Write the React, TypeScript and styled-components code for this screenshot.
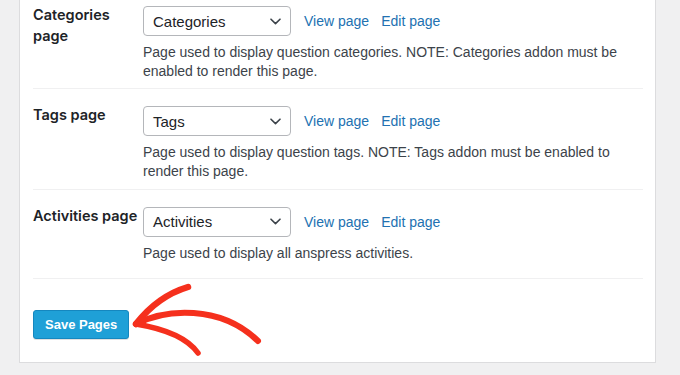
import React from "react";
import styled, { createGlobalStyle } from "styled-components";

const GlobalStyle = createGlobalStyle`
  html, body {
    margin: 0;
    padding: 0;
    background: #f0f0f1;
  }
  body {
    font-family: "Liberation Sans", Arial, sans-serif;
    color: #1d2327;
  }
`;

const pages = [
  {
    label: "Categories page",
    value: "Categories",
    note: "Page used to display question categories. NOTE: Categories addon must be enabled to render this page.",
  },
  {
    label: "Tags page",
    value: "Tags",
    note: "Page used to display question tags. NOTE: Tags addon must be enabled to render this page.",
  },
  {
    label: "Activities page",
    value: "Activities",
    note: "Page used to display all anspress activities.",
  },
];

const Chevron = () => (
  <svg width="11" height="7" viewBox="0 0 11 7">
    <path
      d="M1 1.2 L5.5 5.6 L10 1.2"
      fill="none"
      stroke="#3c434a"
      strokeWidth="1.6"
      strokeLinecap="round"
      strokeLinejoin="round"
    />
  </svg>
);

const Arrow = () => (
  <ArrowLayer width="680" height="375" viewBox="0 0 680 375">
    <g
      fill="none"
      stroke="#f5301d"
      strokeLinecap="round"
      strokeLinejoin="round"
    >
      <path d="M136 324 C 165 309, 220 304, 258 341" strokeWidth="6" />
      <path d="M136 324 C 150 306, 168 293, 188 287" strokeWidth="6.5" />
      <path d="M136 324 C 160 328, 186 336, 198 353" strokeWidth="5.5" />
    </g>
  </ArrowLayer>
);

const App = () => {
  return (
    <Page>
      <GlobalStyle />
      <Panel>
        {pages.map((p) => (
          <Row key={p.label}>
            <Label>{p.label}</Label>
            <Field>
              <Controls>
                <SelectBox>
                  <span>{p.value}</span>
                  <Chevron />
                </SelectBox>
                <Links>
                  <Link href="#">View page</Link>
                  <Link href="#">Edit page</Link>
                </Links>
              </Controls>
              <Description>{p.note}</Description>
            </Field>
          </Row>
        ))}
        <Submit>
          <PrimaryButton type="button">Save Pages</PrimaryButton>
        </Submit>
      </Panel>
      <Arrow />
    </Page>
  );
};

const Page = styled.div`
  position: relative;
  height: 375px;
  overflow: hidden;
  padding: 0 24px 0 19px;
  box-sizing: border-box;
`;

const Panel = styled.div`
  margin-top: -11px;
  background: #fff;
  border: 1px solid #dcdcde;
  border-top: none;
  padding: 0 12px 23px 13px;
`;

const Row = styled.div`
  display: grid;
  grid-template-columns: 110px 1fr;
  padding: 17px 0 8px;
  box-sizing: border-box;
  border-bottom: 1px solid #f0f0f1;
  min-height: 89px;
`;

const Label = styled.div`
  font-family: Inter, "Liberation Sans", sans-serif;
  font-size: 14.5px;
  font-weight: 600;
  line-height: 21px;
  margin-top: -2px;
  color: #1d2327;
`;

const Field = styled.div`
  display: flex;
  flex-direction: column;
`;

const Controls = styled.div`
  display: flex;
  align-items: center;
  gap: 13px;
`;

const SelectBox = styled.div`
  width: 148px;
  height: 30px;
  box-sizing: border-box;
  border: 1px solid #b4b6ba;
  border-radius: 4px;
  background: #fff;
  display: flex;
  align-items: center;
  justify-content: space-between;
  padding: 0 9px 0 9px;
  font-size: 15px;
  color: #1d2327;
`;

const Links = styled.div`
  display: flex;
  gap: 12px;
`;

const Link = styled.a`
  font-size: 14px;
  color: #2271b1;
  text-decoration: none;
`;

const Description = styled.p`
  margin: 7px 0 0;
  font-size: 14px;
  line-height: 18.7px;
  color: #3c434a;
`;

const Submit = styled.div`
  padding-top: 31px;
`;

const PrimaryButton = styled.button`
  height: 29px;
  padding: 0 11px;
  border: 1px solid #1587bf;
  border-radius: 3px;
  background: #1fa0d7;
  color: #fff;
  font-family: "Liberation Sans", Arial, sans-serif;
  font-size: 13px;
  font-weight: 700;
  box-shadow: 0 1px 0 rgba(0, 0, 0, 0.12);
  cursor: pointer;
`;

const ArrowLayer = styled.svg`
  position: absolute;
  left: 0;
  top: 0;
  pointer-events: none;
`;

export default App;
